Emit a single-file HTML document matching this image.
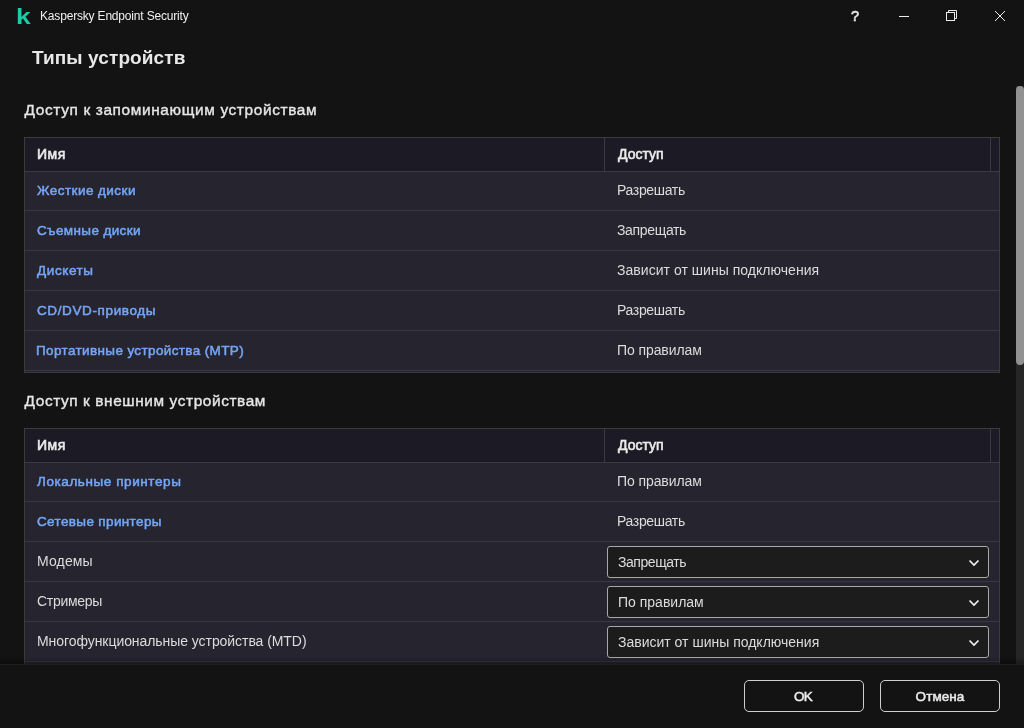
<!DOCTYPE html>
<html lang="ru">
<head>
<meta charset="utf-8">
<title>Kaspersky Endpoint Security</title>
<style>
html,body{margin:0;padding:0;}
body{width:1024px;height:728px;overflow:hidden;background:#131313;position:relative;
  font-family:"Liberation Sans",sans-serif;color:#e6e6e6;}
#app{position:absolute;left:0;top:0;width:1024px;height:728px;will-change:transform;}
.abs{position:absolute;white-space:nowrap;}
.sb{font-weight:normal;-webkit-text-stroke:0.5px currentColor;}
.logo{left:15.6px;top:4px;font-size:22px;line-height:26px;font-weight:bold;color:#1fc8a6;transform:scaleX(1.2);transform-origin:0 0;}
.apptitle{left:40px;top:8px;font-size:12px;line-height:16px;color:#f0f0f0;}
.help{left:851px;top:7px;font-size:14.5px;line-height:18px;color:#e8e8e8;-webkit-text-stroke:0.6px #e8e8e8;}
h1{margin:0;left:32px;top:45px;font-size:19px;line-height:26px;color:#e8e8e8;font-weight:bold;}
h2.sb{margin:0;font-size:15.4px;line-height:20px;color:#e6e6e6;left:24.6px;-webkit-text-stroke-width:0.38px;}
.tbl{left:24px;width:974px;border:1px solid #3b3b3b;background:#26242e;overflow:hidden;}
.hdr{position:absolute;left:0;top:0;width:974px;height:33px;background:#1c1b25;border-bottom:1px solid #3b3a42;}
.hdr .vd{position:absolute;top:0;width:1px;height:33px;background:#3b3a42;}
.hdr span.sb{position:absolute;top:7px;font-size:14px;line-height:18px;color:#ebebeb;-webkit-text-stroke-width:0.6px;}
.row{position:absolute;left:0;width:974px;height:39px;border-bottom:1px solid #393741;}
.row span{position:absolute;top:10px;font-size:14px;line-height:18px;color:#dcdcdc;}
.row.first span{top:9px;}
.row .n{left:12px;}
.row .a{left:592px;}
.row .lnk{color:#75a6f8;top:11px;font-size:13.5px;}
.row.first .lnk{top:10px;}
.combo{position:absolute;left:582px;top:4px;width:380px;height:30px;border:1px solid #a8a8a8;border-radius:3px;background:#1c1c1c;}
.combo span{left:10px;top:6px;}
.combo svg{position:absolute;right:8px;top:12px;}
.track{left:1016px;top:86px;width:8px;height:578px;background:#262626;}
.thumb{left:1016px;top:86px;width:8px;height:279px;background:#929292;border-radius:4px;}
.footer{left:0;top:664px;width:1024px;height:64px;background:#131313;border-top:1px solid #1f1f1f;box-sizing:border-box;}
.btn{top:680px;width:118px;height:30px;border:1px solid #cfcfcf;border-radius:5px;text-align:center;
  font-size:13.5px;line-height:32px;color:#ececec;}
</style>
</head>
<body>
<div id="app">
<div class="abs logo" id="logo">k</div>
<div class="abs apptitle" id="apptitle" style="letter-spacing:-0.180px;">Kaspersky Endpoint Security</div>
<div class="abs help" id="help">?</div>
<svg class="abs" style="left:890px;top:0" width="134" height="32" viewBox="890 0 134 32" fill="none" stroke="#ececec" stroke-width="1">
  <line x1="899" y1="16.5" x2="909" y2="16.5"/>
  <rect x="946.5" y="12.5" width="8" height="8"/>
  <polyline points="948.5,12.5 948.5,10.5 956.5,10.5 956.5,18.5 954.5,18.5"/>
  <line x1="995" y1="11" x2="1005" y2="21"/>
  <line x1="1005" y1="11" x2="995" y2="21"/>
</svg>

<h1 class="abs" id="h1" style="letter-spacing:0.111px;">Типы устройств</h1>

<h2 class="abs sb" id="h2a" style="top:100px;letter-spacing:0.636px;">Доступ к запоминающим устройствам</h2>

<div class="abs tbl" style="top:137px;height:234px;">
  <div class="hdr"><span class="sb" id="hn1" style="left:12px;letter-spacing:0.500px;">Имя</span><i class="vd" style="left:579px"></i><span class="sb" id="ha1" style="left:592px;margin-left:1px;">Доступ</span><i class="vd" style="left:965px"></i></div>
  <div class="row first" style="top:34px;height:38px"><span class="n lnk sb" id="n1" style="letter-spacing:0.450px;">Жесткие диски</span><span class="a" id="a1" style="letter-spacing:-0.338px;">Разрешать</span></div>
  <div class="row" style="top:73px"><span class="n lnk sb" id="n2" style="letter-spacing:0.375px;">Съемные диски</span><span class="a" id="a2" style="letter-spacing:-0.338px;">Запрещать</span></div>
  <div class="row" style="top:113px"><span class="n lnk sb" id="n3" style="letter-spacing:0.600px;">Дискеты</span><span class="a" id="a3" style="letter-spacing:0.035px;">Зависит от шины подключения</span></div>
  <div class="row" style="top:153px"><span class="n lnk sb" id="n4" style="letter-spacing:0.623px;">CD/DVD-приводы</span><span class="a" id="a4" style="letter-spacing:-0.338px;">Разрешать</span></div>
  <div class="row" style="top:193px"><span class="n lnk sb" id="n5" style="letter-spacing:0.367px;margin-left:-1px;">Портативные устройства (MTP)</span><span class="a" id="a5" style="letter-spacing:-0.090px;">По правилам</span></div>
</div>

<h2 class="abs sb" id="h2b" style="top:391px;letter-spacing:0.593px;">Доступ к внешним устройствам</h2>

<div class="abs tbl" style="top:428px;height:260px;">
  <div class="hdr"><span class="sb" id="hn2" style="left:12px;letter-spacing:0.500px;">Имя</span><i class="vd" style="left:579px"></i><span class="sb" id="ha2" style="left:592px;margin-left:1px;">Доступ</span><i class="vd" style="left:965px"></i></div>
  <div class="row first" style="top:34px;height:38px"><span class="n lnk sb" id="n6" style="letter-spacing:0.582px;">Локальные принтеры</span><span class="a" id="a6" style="letter-spacing:-0.090px;">По правилам</span></div>
  <div class="row" style="top:73px"><span class="n lnk sb" id="n7" style="letter-spacing:0.360px;">Сетевые принтеры</span><span class="a" id="a7" style="letter-spacing:-0.338px;">Разрешать</span></div>
  <div class="row" style="top:113px"><span class="n" id="n8" style="letter-spacing:0.144px;">Модемы</span>
    <div class="combo"><span id="c8" style="letter-spacing:-0.450px;">Запрещать</span><svg width="12" height="8" viewBox="0 0 12 8" fill="none" stroke="#f0f0f0" stroke-width="1.7" stroke-linecap="butt"><polyline points="1.5,1.5 6,6 10.5,1.5"/></svg></div></div>
  <div class="row" style="top:153px"><span class="n" id="n9" style="letter-spacing:-0.283px;">Стримеры</span>
    <div class="combo"><span id="c9" style="">По правилам</span><svg width="12" height="8" viewBox="0 0 12 8" fill="none" stroke="#f0f0f0" stroke-width="1.7" stroke-linecap="butt"><polyline points="1.5,1.5 6,6 10.5,1.5"/></svg></div></div>
  <div class="row" style="top:193px"><span class="n" id="n10" style="letter-spacing:-0.062px;">Многофункциональные устройства (MTD)</span>
    <div class="combo"><span id="c10" style="">Зависит от шины подключения</span><svg width="12" height="8" viewBox="0 0 12 8" fill="none" stroke="#f0f0f0" stroke-width="1.7" stroke-linecap="butt"><polyline points="1.5,1.5 6,6 10.5,1.5"/></svg></div></div>
  <div class="row" style="top:233px"></div>
</div>

<div class="abs track"></div>
<div class="abs thumb"></div>

<div class="abs" style="left:0;top:657px;width:1024px;height:7px;background:linear-gradient(to bottom,rgba(0,0,0,0),rgba(0,0,0,0.32));"></div>
<div class="abs footer"></div>
<div class="abs btn sb" style="left:744px"><span id="bok" style="letter-spacing:-0.720px;position:relative;left:-1px;">OK</span></div>
<div class="abs btn sb" style="left:880px"><span id="bcancel" style="letter-spacing:0.070px;">Отмена</span></div>
</div>
</body>
</html>
